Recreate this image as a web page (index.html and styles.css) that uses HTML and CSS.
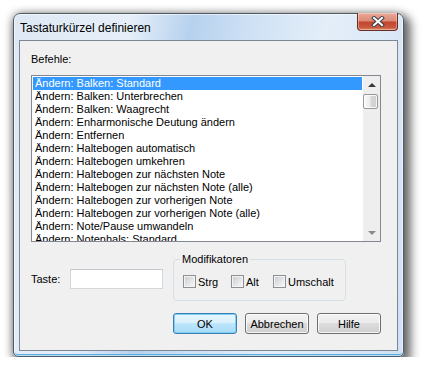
FILE: index.html
```html
<!DOCTYPE html>
<html lang="de">
<head>
    <meta charset="UTF-8">
    <meta name="viewport" content="width=device-width, initial-scale=1.0">
    <title>Tastaturkürzel definieren</title>
    <link rel="stylesheet" href="styles.css">
</head>
<body>
    <div class="window">
        <div class="titlebar">
            <span class="title">Tastaturkürzel definieren</span>
            <button class="close" title="Schließen">
                <svg width="14" height="11" viewBox="0 0 14 11">
                    <path d="M3 2 L11 9 M11 2 L3 9" stroke="#3b3f46" stroke-width="4" stroke-linecap="square"/>
                    <path d="M3 2 L11 9 M11 2 L3 9" stroke="#ffffff" stroke-width="2" stroke-linecap="square"/>
                </svg>
            </button>
        </div>

        <div class="client">
            <div class="caption">Befehle:</div>

            <div class="listbox">
                <ul class="items">
                    <li class="selected">Ändern: Balken: Standard</li>
                    <li>Ändern: Balken: Unterbrechen</li>
                    <li>Ändern: Balken: Waagrecht</li>
                    <li>Ändern: Enharmonische Deutung ändern</li>
                    <li>Ändern: Entfernen</li>
                    <li>Ändern: Haltebogen automatisch</li>
                    <li>Ändern: Haltebogen umkehren</li>
                    <li>Ändern: Haltebogen zur nächsten Note</li>
                    <li>Ändern: Haltebogen zur nächsten Note (alle)</li>
                    <li>Ändern: Haltebogen zur vorherigen Note</li>
                    <li>Ändern: Haltebogen zur vorherigen Note (alle)</li>
                    <li>Ändern: Note/Pause umwandeln</li>
                    <li>Ändern: Notenhals: Standard</li>
                </ul>
                <div class="scrollbar">
                    <div class="arrow up"></div>
                    <div class="track"><div class="thumb"></div></div>
                    <div class="arrow down"></div>
                </div>
            </div>

            <div class="bottom">
                <div class="key">
                    <label for="keyInput">Taste:</label>
                    <input type="text" id="keyInput">
                </div>
                <fieldset class="mods">
                    <legend>Modifikatoren</legend>
                    <div class="checks">
                        <label class="check first"><span class="box"></span>Strg</label>
                        <label class="check second"><span class="box"></span>Alt</label>
                        <label class="check"><span class="box"></span>Umschalt</label>
                    </div>
                </fieldset>
            </div>

            <div class="buttons">
                <button class="btn default">OK</button>
                <button class="btn">Abbrechen</button>
                <button class="btn">Hilfe</button>
            </div>
        </div>
    </div>
</body>
</html>
```

FILE: styles.css
```css
body {
    margin: 0;
    background-color: #fff;
    font-family: "Liberation Sans", Arial, sans-serif;
    font-size: 11px;
    color: #000;
}

.window {
    position: relative;
    margin: 13px 0 0 13px;
    width: 391px;
    height: 344px;
    box-sizing: border-box;
    border: 1px solid #505a67;
    border-radius: 7px 7px 5px 5px;
    padding: 0 5px 5px 5px;
    background: linear-gradient(100deg, #dde8f4 0%, #e6eff9 26%, #b6d1ee 40%, #cde0f4 52%, #e4eef9 70%, #cfe1f5 100%);
    box-shadow: inset 0 0 0 1px rgba(255, 255, 255, 0.6), inset 0 -2px 0 #55ade2, 4px 5px 10px 3px rgba(0, 0, 0, 0.55), -1px 0 8px rgba(0, 0, 0, 0.25);
}

.titlebar {
    height: 26px;
    display: flex;
    align-items: center;
}

.title {
    padding-left: 1px;
    padding-top: 1px;
    font-size: 12px;
    color: #000;
}

.close {
    position: absolute;
    top: -1px;
    right: 5px;
    width: 41px;
    height: 18px;
    padding: 0;
    border: 1px solid #6b2a22;
    border-top: none;
    border-radius: 0 0 4px 4px;
    background: linear-gradient(#eaa998 0%, #dc8b79 45%, #c4452f 55%, #c85a3e 85%, #dc8a6a 100%);
    box-shadow: inset 0 0 0 1px rgba(255, 255, 255, 0.35);
    display: flex;
    align-items: center;
    justify-content: center;
}

.client {
    height: 311px;
    box-sizing: border-box;
    border: 1px solid #7d8794;
    background-color: #f0f0f0;
    padding: 12px 16px 0 11px;
}

.caption {
    line-height: 13px;
    margin-bottom: 9px;
}

.listbox {
    display: flex;
    height: 167px;
    box-sizing: border-box;
    border: 1px solid #828790;
    background-color: #fff;
}

.items {
    list-style-type: none;
    margin: 0;
    padding: 1px 1px 0 1px;
    flex: 1;
    overflow: hidden;
}

.items li {
    height: 13px;
    line-height: 13px;
    padding-left: 2px;
    white-space: nowrap;
}

.items li.selected {
    background-color: #3399ff;
    color: #fff;
}

.scrollbar {
    width: 17px;
    display: flex;
    flex-direction: column;
    background-color: #eeeeee;
}

.arrow {
    height: 17px;
    display: flex;
    align-items: center;
    justify-content: center;
}

.arrow::after {
    content: "";
    border-left: 4px solid transparent;
    border-right: 4px solid transparent;
}

.arrow.up::after {
    border-bottom: 4px solid #3a3a3a;
}

.arrow.down::after {
    border-top: 4px solid #8a8a8a;
}

.track {
    flex: 1;
    padding-top: 1px;
}

.thumb {
    width: 15px;
    height: 15px;
    box-sizing: border-box;
    border: 1px solid #989898;
    border-radius: 2px;
    background: linear-gradient(to right, #fafafa 0%, #ececec 45%, #d6d6d6 55%, #cfcfcf 100%);
    box-shadow: inset 0 0 0 1px rgba(255, 255, 255, 0.8);
}

.bottom {
    display: flex;
    align-items: flex-start;
    margin-top: 11px;
}

.key {
    display: flex;
    align-items: center;
    gap: 9px;
    margin-top: 16px;
    margin-right: 10px;
}

.key label {
    width: 30px;
}

.key input {
    width: 93px;
    height: 20px;
    box-sizing: border-box;
    margin: 0;
    border: 1px solid #d3d7dc;
    border-top-color: #c3c8ce;
    background-color: #fff;
    font: inherit;
}

.mods {
    width: 173px;
    height: 48px;
    box-sizing: border-box;
    margin: 0;
    padding: 0 0 0 6px;
    border: 1px solid #d5dfe5;
    border-radius: 4px;
}

.mods legend {
    padding: 0 2px;
    line-height: 13px;
}

.checks {
    display: flex;
    margin-top: 9px;
    padding-left: 3px;
}

.check {
    display: flex;
    align-items: center;
    gap: 2px;
    height: 13px;
}

.check.first {
    width: 48px;
}

.check.second {
    width: 42px;
}

.box {
    width: 13px;
    height: 13px;
    box-sizing: border-box;
    border: 1px solid #8e8f8f;
    background: linear-gradient(135deg, #c6cbd1 0%, #e6e8ea 60%, #f8f8f8 100%);
    box-shadow: inset 0 0 0 1px #f4f4f4;
}

.buttons {
    display: flex;
    justify-content: flex-end;
    gap: 8px;
    margin-top: 12px;
}

.btn {
    width: 64px;
    height: 21px;
    padding: 0;
    border: 1px solid #707070;
    border-radius: 3px;
    background: linear-gradient(#f2f2f2 0%, #ebebeb 50%, #dddddd 50%, #cfcfcf 100%);
    box-shadow: inset 0 0 0 1px rgba(255, 255, 255, 0.8);
    font: inherit;
    color: #000;
}

.btn.default {
    border-color: #3c7fb1;
    background: linear-gradient(#eaf6fd 0%, #d9f0fc 50%, #bee6fd 50%, #a7d9f5 100%);
    box-shadow: inset 0 0 0 1px #7ad0f5;
}
```
